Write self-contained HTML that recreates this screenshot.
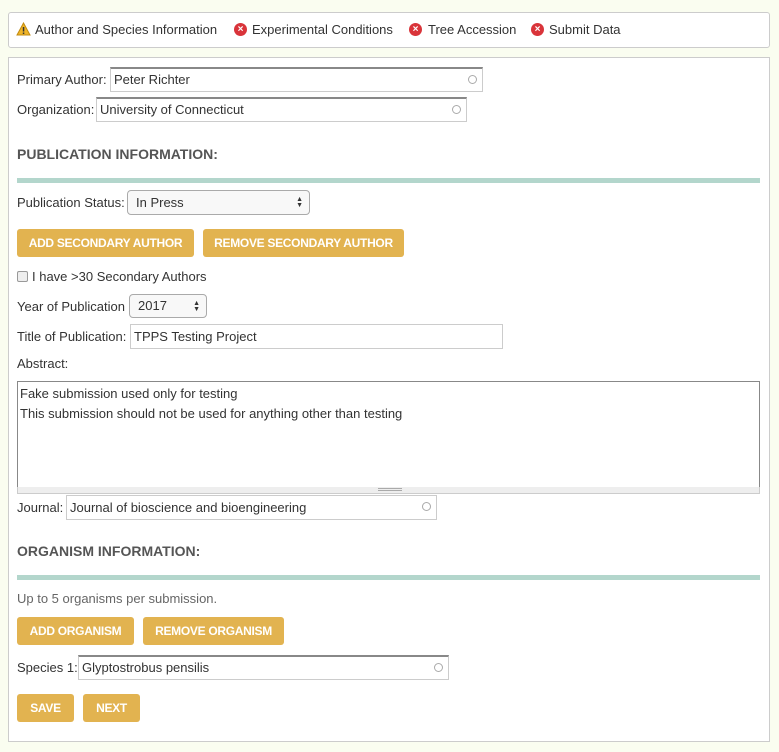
<!DOCTYPE html>
<html><head><style>
*{box-sizing:border-box;margin:0;padding:0}
body{width:779px;height:752px;background:#fafdf0;font-family:"Liberation Sans",sans-serif;font-size:13px;color:#333;position:relative;overflow:hidden}
.a{position:absolute;white-space:nowrap}
.box{position:absolute;background:#fff;border:1px solid #ccc;border-radius:3px}
.lbl{position:absolute;line-height:16px;transform:translateY(-7px)}
.inp{position:absolute;border:1px solid #ccc;border-top:2px solid #888;background:#fff;padding-left:3px;line-height:21px;font-size:13px}
.circ{position:absolute;right:5px;top:6px;width:9px;height:9px;border:1.5px solid #aaa;border-radius:50%}
.h{position:absolute;font-weight:bold;font-size:14px;color:#555;line-height:16px;transform:translateY(-7px)}
.bar{position:absolute;left:17px;width:743px;height:5px;background:#b3d6cc}
.btn{position:absolute;background:#e2b350;color:#fff;font-weight:bold;font-size:12px;border-radius:3px;text-align:center;letter-spacing:-0.3px}
.sel{position:absolute;border:1px solid #aaa;border-radius:4px;background:#f8f8f8;padding-left:8px;font-size:13px}
.arr{position:absolute;right:6px;top:6px;font-size:7px;line-height:6px;color:#333}
.x{position:absolute;width:13px;height:13px;border-radius:50%;background:#d9343a;color:#fff;font-size:10px;font-weight:bold;line-height:13px;text-align:center}
</style></head><body>
<div class="box" style="left:8px;top:12px;width:762px;height:36px"></div>
<svg class="a" style="left:16px;top:22px" width="15" height="14" viewBox="0 0 15 14"><path d="M7.5 1 L14 13 L1 13 Z" fill="#f0b528" stroke="#c08a10" stroke-width="1"/><rect x="6.8" y="5" width="1.5" height="4.5" fill="#333"/><rect x="6.8" y="10.5" width="1.5" height="1.5" fill="#333"/></svg>
<div class="lbl" style="left:35px;top:29px">Author and Species Information</div>
<div class="x" style="left:234px;top:23px">×</div>
<div class="lbl" style="left:252px;top:29px">Experimental Conditions</div>
<div class="x" style="left:409px;top:23px">×</div>
<div class="lbl" style="left:428px;top:29px">Tree Accession</div>
<div class="x" style="left:531px;top:23px">×</div>
<div class="lbl" style="left:549px;top:29px">Submit Data</div>

<div class="box" style="left:8px;top:57px;width:762px;height:685px;border-radius:0"></div>

<div class="lbl" style="left:17px;top:79px">Primary Author:</div>
<div class="inp" style="left:110px;top:67px;width:373px;height:25px">Peter Richter<div class="circ"></div></div>
<div class="lbl" style="left:17px;top:109px">Organization:</div>
<div class="inp" style="left:96px;top:97px;width:371px;height:25px">University of Connecticut<div class="circ"></div></div>

<div class="h" style="left:17px;top:153px">PUBLICATION INFORMATION:</div>
<div class="bar" style="top:178px"></div>

<div class="lbl" style="left:17px;top:202px">Publication Status:</div>
<div class="sel" style="left:127px;top:190px;width:183px;height:25px;line-height:23px">In Press<div class="arr">▲<br>▼</div></div>

<div class="btn" style="left:17px;top:229px;width:177px;height:28px;line-height:28px">ADD SECONDARY AUTHOR</div>
<div class="btn" style="left:203px;top:229px;width:201px;height:28px;line-height:28px">REMOVE SECONDARY AUTHOR</div>

<div class="a" style="left:17px;top:271px;width:11px;height:11px;border:1px solid #999;border-radius:2px;background:#eee"></div>
<div class="lbl" style="left:32px;top:276px">I have &gt;30 Secondary Authors</div>

<div class="lbl" style="left:17px;top:306px">Year of Publication</div>
<div class="sel" style="left:129px;top:294px;width:78px;height:24px;line-height:22px">2017<div class="arr">▲<br>▼</div></div>

<div class="lbl" style="left:17px;top:336px">Title of Publication:</div>
<div class="inp" style="left:130px;top:324px;width:373px;height:25px;border-top:1px solid #ccc;line-height:23px">TPPS Testing Project</div>

<div class="lbl" style="left:17px;top:363px">Abstract:</div>
<div class="a" style="left:17px;top:381px;width:743px;height:107px;border:1px solid #888;padding:2px;line-height:20px;white-space:normal">Fake submission used only for testing<br>This submission should not be used for anything other than testing</div>
<div class="a" style="left:17px;top:487px;width:743px;height:7px;background:#eee;border:1px solid #ccc;border-top:none"><div class="a" style="left:360px;top:1px;width:24px;height:3px;border-top:1px solid #aaa;border-bottom:1px solid #aaa"></div></div>

<div class="lbl" style="left:17px;top:507px">Journal:</div>
<div class="inp" style="left:66px;top:495px;width:371px;height:25px;border-top:1px solid #ccc;line-height:23px">Journal of bioscience and bioengineering<div class="circ"></div></div>

<div class="h" style="left:17px;top:550px">ORGANISM INFORMATION:</div>
<div class="bar" style="top:575px"></div>
<div class="lbl" style="left:17px;top:598px;color:#666">Up to 5 organisms per submission.</div>

<div class="btn" style="left:17px;top:617px;width:117px;height:28px;line-height:28px">ADD ORGANISM</div>
<div class="btn" style="left:143px;top:617px;width:141px;height:28px;line-height:28px">REMOVE ORGANISM</div>

<div class="lbl" style="left:17px;top:667px">Species 1:</div>
<div class="inp" style="left:78px;top:655px;width:371px;height:25px">Glyptostrobus pensilis<div class="circ"></div></div>

<div class="btn" style="left:17px;top:694px;width:57px;height:28px;line-height:28px">SAVE</div>
<div class="btn" style="left:83px;top:694px;width:57px;height:28px;line-height:28px">NEXT</div>
</body></html>
